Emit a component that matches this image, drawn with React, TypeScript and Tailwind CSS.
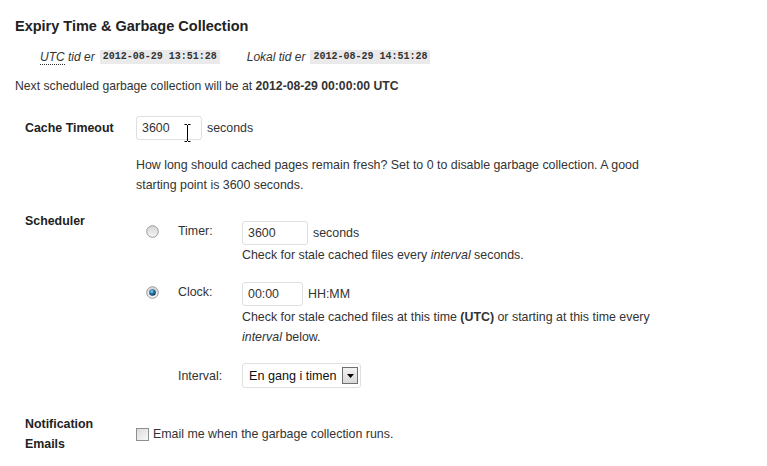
import React from 'react';

function Radio({ checked }: { checked?: boolean }) {
    return (
        <svg width="13" height="13" viewBox="0 0 13 13" className="block">
            <defs>
                <linearGradient id={checked ? 'rg1' : 'rg0'} x1="0" y1="0" x2="0" y2="1">
                    <stop offset="0" stopColor="#d4d4d4" />
                    <stop offset="1" stopColor="#f6f6f6" />
                </linearGradient>
                <radialGradient id="dot" cx="0.4" cy="0.35" r="0.6">
                    <stop offset="0" stopColor="#9fd3ee" />
                    <stop offset="0.5" stopColor="#2a7cb0" />
                    <stop offset="1" stopColor="#0c3d63" />
                </radialGradient>
            </defs>
            <circle cx="6.5" cy="6.5" r="5.8" fill={`url(#${checked ? 'rg1' : 'rg0'})`} stroke="#9a9b9b" strokeWidth="1" />
            {checked && <circle cx="6.5" cy="6.5" r="3.3" fill="url(#dot)" />}
        </svg>
    );
}

function Field({ value, width }: { value: string; width: string }) {
    return (
        <div className={`${width} h-[24px] border border-[#dfdfdf] rounded-[3px] bg-white pl-[5px] leading-[22px] text-[12.4px] text-[#333]`}>
            {value}
        </div>
    );
}

export default function App() {
    return (
        <div className="w-[767px] h-[466px] bg-white px-[15px] text-[12.4px] text-[#333] font-['Liberation_Sans',Arial,sans-serif] overflow-hidden">
            {/* Heading */}
            <h3 className="pt-[15px] h-[37px] leading-[22px] text-[14.5px] font-bold text-[#222]">
                Expiry Time &amp; Garbage Collection
            </h3>

            {/* Times */}
            <div className="mt-[10px] h-[20px] flex items-center pl-[25px] italic text-[12px]">
                <span>
                    <span className="border-b border-dotted border-[#333] leading-[14px]">UTC</span> tid er
                </span>
                <code className="ml-[5px] bg-[#eaeaea] px-[3px] h-[14px] leading-[14px] text-[10px] font-bold not-italic text-[#333] font-['Liberation_Mono',monospace]">
                    2012-08-29 13:51:28
                </code>
                <span className="ml-[27px]">Lokal tid er</span>
                <code className="ml-[5px] bg-[#eaeaea] px-[3px] h-[14px] leading-[14px] text-[10px] font-bold not-italic text-[#333] font-['Liberation_Mono',monospace]">
                    2012-08-29 14:51:28
                </code>
            </div>

            <p className="mt-[9px] leading-[20px] text-[12.2px]">
                Next scheduled garbage collection will be at <b>2012-08-29 00:00:00 UTC</b>
            </p>

            {/* Cache timeout */}
            <div className="mt-[20px] flex">
                <div className="w-[121px] pl-[10px] leading-[24px] font-bold text-[#222]">Cache Timeout</div>
                <div className="w-[524px]">
                    <div className="flex items-center">
                        <div className="relative">
                            <Field value="3600" width="w-[66px]" />
                            <svg width="7" height="18" viewBox="0 0 7 18" className="absolute left-[48px] top-[8px]">
                                <path d="M0.5 0.5h2.5M4 0.5h2.5M3.5 1v16M0.5 17.5h2.5M4 17.5h2.5" stroke="#000" strokeWidth="1" fill="none" />
                            </svg>
                        </div>
                        <span className="ml-[5px]">seconds</span>
                    </div>
                    <p className="mt-[15px] leading-[20px]">
                        How long should cached pages remain fresh? Set to 0 to disable garbage collection. A good starting point is 3600 seconds.
                    </p>
                </div>
            </div>

            {/* Scheduler */}
            <div className="mt-[16px] flex">
                <div className="w-[121px] pl-[10px] leading-[20px] font-bold text-[#222]">Scheduler</div>
                <div className="w-[524px] pt-[10px] grid grid-cols-[42px_64px_1fr]">
                    <div className="pl-[10px] pt-[4px]"><Radio /></div>
                    <div className="leading-[20px]">Timer:</div>
                    <div>
                        <div className="flex items-center">
                            <Field value="3600" width="w-[66px]" />
                            <span className="ml-[5px] pt-[1px]">seconds</span>
                        </div>
                        <p className="leading-[20px]">
                            Check for stale cached files every <i>interval</i> seconds.
                        </p>
                    </div>

                    <div className="pl-[10px] pt-[21px]"><Radio checked /></div>
                    <div className="leading-[20px] pt-[17px]">Clock:</div>
                    <div className="pt-[17px]">
                        <div className="flex items-center">
                            <Field value="00:00" width="w-[61px]" />
                            <span className="ml-[5px]">HH:MM</span>
                        </div>
                        <p className="leading-[20px] w-[418px] pt-[1px]">
                            Check for stale cached files at this time <b>(UTC)</b> or starting at this time every <i>interval</i> below.
                        </p>
                    </div>

                    <div />
                    <div className="leading-[20px] pt-[19px]">Interval:</div>
                    <div className="pt-[16px]">
                        <div className="w-[119px] h-[25px] border border-[#dfdfdf] rounded-[3px] bg-white flex items-center justify-between pl-[6px] pr-[2px]">
                            <span className="text-[12.6px] text-[#111] leading-[20px]">En gang i timen</span>
                            <div className="w-[16px] h-[17px] border border-[#707070] bg-gradient-to-b from-[#f2f2f2] to-[#d8d8d8] flex items-center justify-center">
                                <svg width="7" height="4" viewBox="0 0 7 4">
                                    <path d="M0 0h7L3.5 4z" fill="#000" />
                                </svg>
                            </div>
                        </div>
                    </div>
                </div>
            </div>

            {/* Notification */}
            <div className="mt-[26px] flex">
                <div className="w-[121px] pl-[10px] leading-[20px] font-bold text-[#222]">
                    Notification
                    <br />
                    Emails
                </div>
                <div className="flex items-center pt-[1px]">
                    <div className="w-[13px] h-[13px] border border-[#8e8f8f] bg-gradient-to-br from-[#dcdcdc] to-[#f8f8f8]" />
                    <span className="ml-[4px]">Email me when the garbage collection runs.</span>
                </div>
            </div>
        </div>
    );
}
